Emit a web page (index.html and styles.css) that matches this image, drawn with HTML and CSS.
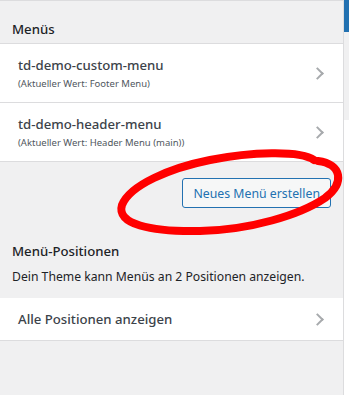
FILE: index.html
```html
<!DOCTYPE html>
<html lang="de">
<head>
    <meta charset="UTF-8">
    <meta name="viewport" content="width=device-width, initial-scale=1.0">
    <title>Menüs</title>
    <link rel="stylesheet" href="styles.css">
</head>
<body>
    <div class="page">
        <div class="panel">
            <div class="section-head">Menüs</div>

            <div class="menu-item">
                <div class="item-text">
                    <div class="item-title">td-demo-custom-menu</div>
                    <div class="item-sub">(Aktueller Wert: Footer Menu)</div>
                </div>
                <span class="chevron"></span>
            </div>
            <div class="menu-item">
                <div class="item-text">
                    <div class="item-title">td-demo-header-menu</div>
                    <div class="item-sub">(Aktueller Wert: Header Menu (main))</div>
                </div>
                <span class="chevron"></span>
            </div>

            <div class="actions">
                <button class="btn-new">Neues Menü erstellen</button>
            </div>

            <div class="locations">
                <h3>Menü-Positionen</h3>
                <p>Dein Theme kann Menüs an 2 Positionen anzeigen.</p>
            </div>

            <div class="menu-item single">
                <div class="item-title">Alle Positionen anzeigen</div>
                <span class="chevron"></span>
            </div>
        </div>
        <div class="edge">
            <div class="edge-top"></div>
            <div class="edge-mid"></div>
        </div>
    </div>

    <!-- red marker scribble around the button -->
    <svg class="marker" width="349" height="395" viewBox="0 0 349 395">
        <path d="M314 160 C300 150 250 152 210 160 C170 168 130 185 122 205 C116 224 150 232 200 231 C250 230 300 215 325 198 C345 183 342 164 318 161"
              fill="none" stroke="#ff0000" stroke-width="8" stroke-linecap="round" stroke-linejoin="round"/>
    </svg>
</body>
</html>
```

FILE: styles.css
```css
body {
    margin: 0;
    font-family: "Noto Sans", "Open Sans", sans-serif;
    color: #1d2327;
    background: #fff;
}
.page {
    display: flex;
    height: 395px;
}
.panel {
    width: 343px;
    background: #f0f0f1;
    border-top: 1px solid #dcdcde;
    border-right: 1px solid #dcdcde;
}
.section-head {
    height: 43px;
    box-sizing: border-box;
    padding: 19px 12px 0;
    font-size: 13.2px;
    font-weight: 500;
    line-height: 18px;
    color: #1d2327;
    border-bottom: 1px solid #dcdcde;
}
.menu-item {
    display: flex;
    align-items: center;
    justify-content: space-between;
    height: 58px;
    padding: 0 18px;
    background: #fff;
    border-bottom: 1px solid #dcdcde;
}
.menu-item.single {
    height: 42px;
}
.item-title {
    font-size: 13.2px;
    font-weight: 500;
    line-height: 18px;
    color: #3c434a;
}
.item-sub {
    font-size: 9.5px;
    line-height: 14px;
    margin-top: 3px;
    color: #50575e;
}
.chevron {
    width: 7px;
    height: 7px;
    margin-right: 3px;
    border-top: 2px solid #a7aaad;
    border-right: 2px solid #a7aaad;
    transform: rotate(45deg);
}
.actions {
    display: flex;
    justify-content: flex-end;
    padding: 16px 12px 0;
    height: 60px;
    box-sizing: border-box;
}
.btn-new {
    height: 30px;
    padding: 0 10px;
    font-family: inherit;
    font-size: 12.3px;
    color: #2271b1;
    background: #f6f7f7;
    border: 1px solid #2271b1;
    border-radius: 3px;
}
.locations {
    padding: 20px 12px 12px;
}
.locations h3 {
    margin: 0;
    font-size: 13.2px;
    font-weight: 500;
    line-height: 18px;
    color: #1d2327;
}
.locations p {
    margin: 8px 0 0;
    font-size: 12.2px;
    line-height: 18px;
    color: #1d2327;
}
.edge {
    flex: 1;
    display: flex;
    flex-direction: column;
}
.edge-top {
    height: 32px;
    background: #2271b1;
}
.edge-mid {
    height: 88px;
    background: #f0f0f1;
}
.marker {
    position: absolute;
    top: 0;
    left: 0;
    pointer-events: none;
}
```
